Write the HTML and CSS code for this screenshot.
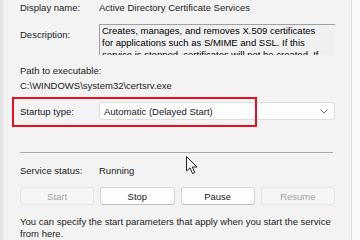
FILE: index.html
```html
<!DOCTYPE html>
<html lang="en">
<head>
  <meta charset="UTF-8" />
  <title>Active Directory Certificate Services Properties</title>
  <link rel="stylesheet" href="styles.css">
</head>
<body>
  <div class="dialog">
    <div class="edge-left"></div>

    <div class="panel">
      <div class="row first">
        <span class="label">Display name:</span>
        <span class="value">Active Directory Certificate Services</span>
      </div>

      <div class="row desc-row">
        <span class="label desc-label">Description:</span>
        <div class="desc-box">
          Creates, manages, and removes X.509 certificates for applications such as S/MIME and SSL. If this service is stopped, certificates will not be created. If this service is disabled, any services that explicitly depend on it will fail to start.
        </div>
      </div>

      <div class="line path-label">Path to executable:</div>
      <div class="line path-value">C:\WINDOWS\system32\certsrv.exe</div>

      <div class="row startup">
        <span class="label">Startup type:</span>
        <div class="combo">
          <span>Automatic (Delayed Start)</span>
          <svg class="chevron" width="8" height="5" viewBox="0 0 8 5">
            <path d="M0.5 0.5 L4 4 L7.5 0.5" fill="none" stroke="#6b6b6b" stroke-width="1" />
          </svg>
        </div>
      </div>

      <div class="separator"></div>

      <div class="row status">
        <span class="label">Service status:</span>
        <span class="value">Running</span>
      </div>

      <div class="buttons">
        <button class="btn" disabled>Start</button>
        <button class="btn">Stop</button>
        <button class="btn">Pause</button>
        <button class="btn" disabled>Resume</button>
      </div>

      <p class="hint">You can specify the start parameters that apply when you start the service from here.</p>
    </div>

    <div class="edge-right"></div>

    <!-- annotation + pointer drawn over the dialog -->
    <div class="highlight"></div>
    <svg class="cursor" width="12" height="19" viewBox="0 0 12 19">
      <path d="M0.5 0.5 L0.5 15 L4 11.8 L6.6 17.6 L8.8 16.6 L6.3 11 L11 11 Z" fill="#fff" stroke="#222" stroke-width="1" stroke-linejoin="round" />
    </svg>
  </div>
</body>
</html>
```

FILE: styles.css
```css
body {
  margin: 0;
  font-family: 'Liberation Sans', Arial, sans-serif;
  font-size: 9.5px;
  color: #1b1b1b;
  background: #f3f3f3;
}

.dialog {
  position: relative;
  display: flex;
  width: 360px;
  height: 240px;
  overflow: hidden;
}

.edge-left {
  width: 3px;
  background: #e4e4e4;
}

.panel {
  flex: 1;
  padding: 0 16px 0 17px;
  background: #f3f3f3;
}

.edge-right {
  width: 8px;
  border-left: 1px solid #dcdcdc;
  background: #fafafa;
}

.row {
  display: flex;
  align-items: center;
}

.label {
  width: 79px;
  flex-shrink: 0;
}

.first {
  height: 14px;
}

.desc-row {
  align-items: flex-start;
  margin-top: 10px;
}

.desc-label {
  margin-top: 5px;
}

.desc-box {
  flex: 1;
  height: 30px;
  overflow: hidden;
  padding: 0 16px 0 2px;
  line-height: 12px;
  border-top: 1px solid #a0a0a0;
  border-left: 1px solid #a0a0a0;
  background: #f0f0f0;
  color: #000;
}

.line {
  line-height: 14px;
}

.path-label {
  margin-top: 9px;
}

.path-value {
  margin-top: 1px;
}

.startup {
  margin-top: 9px;
}

.combo {
  flex: 1;
  height: 16px;
  display: flex;
  align-items: center;
  justify-content: space-between;
  padding: 0 6px 0 4px;
  background: #fdfdfd;
  border: 1px solid #dedede;
  border-radius: 3px;
}

.separator {
  height: 1px;
  margin: 32px 2px 0 0;
  background: #a8a8a8;
}

.status {
  height: 14px;
  margin-top: 10px;
}

.buttons {
  display: flex;
  gap: 6px;
  margin-top: 10px;
}

.btn {
  flex: 1;
  height: 18px;
  padding: 0;
  font-family: inherit;
  font-size: 9.5px;
  color: #1b1b1b;
  background: #fdfdfd;
  border: 1px solid #d6d6d6;
  border-bottom-color: #bdbdbd;
  border-radius: 3px;
}

.btn:disabled {
  color: #a3a3a3;
  background: #f6f6f6;
  border-color: #e6e6e6;
}

.hint {
  margin: 11px 0 0;
  line-height: 12px;
}

.highlight {
  position: absolute;
  left: 12px;
  top: 97px;
  width: 241px;
  height: 26px;
  border: 2px solid #e81123;
}

.cursor {
  position: absolute;
  left: 186px;
  top: 156px;
}
```
